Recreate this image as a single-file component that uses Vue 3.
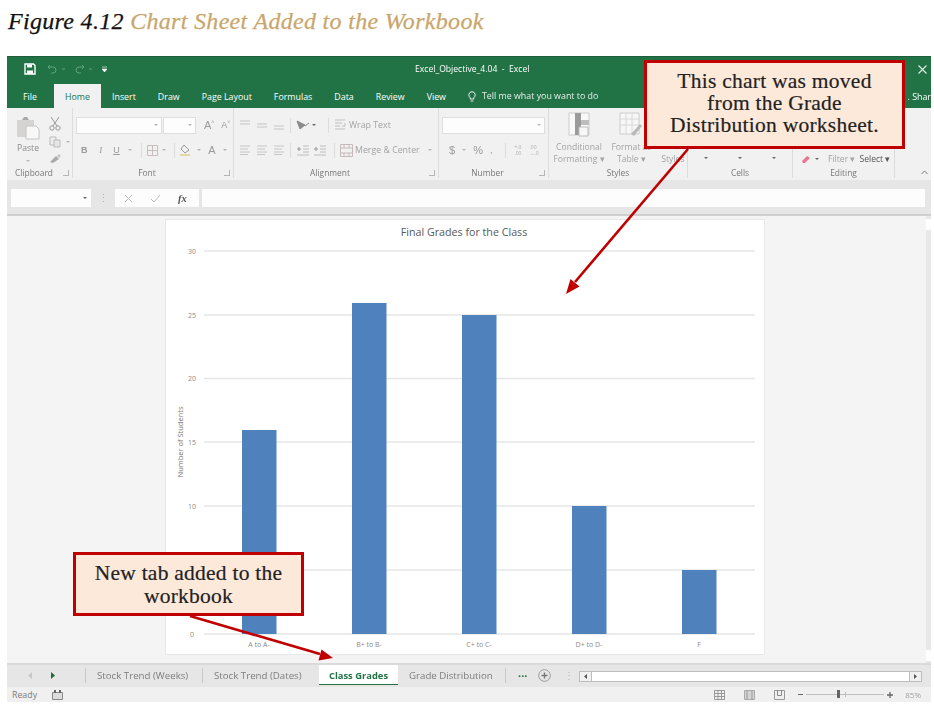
<script setup>
const quickTabs = ['Insert', 'Draw', 'Page Layout', 'Formulas', 'Data', 'Review', 'View']
const ticks = [
  { label: 30, y: 32 }, { label: 25, y: 96 }, { label: 20, y: 159.5 },
  { label: 15, y: 223 }, { label: 10, y: 287 }, { label: '', y: 351 }, { label: 0, y: 415 }
]
const bars = [
  { label: 'A to A-', x: 77, y: 211 },
  { label: 'B+ to B-', x: 187, y: 84 },
  { label: 'C+ to C-', x: 297, y: 96 },
  { label: 'D+ to D-', x: 407, y: 287 },
  { label: 'F', x: 517, y: 351 }
]
</script>

<template>
  <div class="stage">
    <h1 class="heading"><span class="fig">Figure 4.12</span> <span class="cap">Chart Sheet Added to the Workbook</span></h1>

    <div class="window">
      <header class="titlebar">
        <div class="qat">
          <svg width="12" height="12" viewBox="0 0 12 12"><path d="M1 1h8.500L11 2.500V11H1z" fill="none" stroke="#fff" stroke-width="1.400"/><path d="M3 1.500h5v3H3zM3 7.500h6V11H3z" fill="#fff"/></svg>
          <svg class="dim" width="46" height="10" viewBox="0 0 46 10"><path d="M1 3h5a3 3 0 0 1 0 6H4M1 3l2-2M1 3l2 2" fill="none" stroke="#5fa27f"/><path d="M15 5h3" stroke="#5fa27f"/><path d="M37 3h-5a3 3 0 0 0 0 6h2M37 3l-2-2M37 3l-2 2" fill="none" stroke="#5fa27f"/><path d="M42 5h3" stroke="#5fa27f"/></svg>
          <svg class="more" width="5" height="7" viewBox="0 0 5 7"><path d="M0 1h5M0 3l2.500 3 2.500-3z" fill="#fff" stroke="#fff" stroke-width=".6"/></svg>
        </div>
        <div class="doc">Excel_Objective_4.04&nbsp; -&nbsp; Excel</div>
        <svg class="close" width="9" height="9" viewBox="0 0 9 9"><path d="M.5.5l8 8M8.500.5l-8 8" stroke="#dfeee5" stroke-width="1.100"/></svg>
      </header>

      <nav class="tabs">
        <span class="tab file">File</span>
        <span class="tab active">Home</span>
        <span v-for="t in quickTabs" :key="t" class="tab">{{ t }}</span>
        <span class="tell">
          <svg width="8" height="11" viewBox="0 0 8 11"><path d="M4 .7a3.300 3.300 0 0 0-1.800 6V8h3.600V6.700A3.300 3.300 0 0 0 4 .7zM2.700 10h2.600" fill="none" stroke="#fff" stroke-width=".9"/></svg>
          Tell me what you want to do
        </span>
        <span class="share">. Shar</span>
      </nav>

      <section class="ribbon">
        <div class="group g-clip">
          <div class="body clip-body">
            <div class="paste">
              <svg width="25" height="24" viewBox="0 0 25 24"><path d="M1 4h17v17H1z" fill="#d6d3d3"/><path d="M6 4l2-3h3l2 3z" fill="#aaa"/><path d="M10 10h10l3 3v10H10z" fill="#f7f7f7" stroke="#c4c4c4"/></svg>
              <span>Paste</span>
              <i class="caret"></i>
            </div>
            <div class="clip-tools">
              <svg width="12" height="15" viewBox="0 0 12 15"><path d="M2 1l6 9M10 1L4 10" stroke="#999" fill="none"/><circle cx="3" cy="12" r="2.200" fill="none" stroke="#999"/><circle cx="9" cy="12" r="2.200" fill="none" stroke="#999"/></svg>
              <span class="tool-row"><svg width="13" height="12" viewBox="0 0 13 12"><path d="M1 1h6v8H1z" fill="#eee" stroke="#bbb"/><path d="M5 4h6v7H5z" fill="#e6e6e6" stroke="#bbb"/></svg><i class="caret"></i></span>
              <svg width="13" height="11" viewBox="0 0 13 11"><path d="M1 9l6-6 3 3-6 4z" fill="#aaa"/><path d="M8 3l2-2 2 2-2 2z" fill="#c6c6c6"/></svg>
            </div>
          </div>
          <div class="label left">Clipboard<i class="launch"></i></div>
        </div>

        <div class="group g-font">
          <div class="body rows">
            <div class="row font-top">
              <span class="box font-name"><i class="caret"></i></span>
              <span class="box font-size"><i class="caret"></i></span>
              <span class="glyph big">A<sup>˄</sup></span>
              <span class="glyph small">A<sup>˅</sup></span>
            </div>
            <div class="font-bottom">
              <b class="glyph">B</b><em class="glyph">I</em><u class="glyph">U</u><i class="caret"></i>
              <i class="sep"></i>
              <svg width="11" height="11" viewBox="0 0 11 11"><path d="M.5.5h10v10H.5zM5.500.5v10M.5 5.500h10" fill="none" stroke="#c9bcbc"/></svg>
              <i class="caret"></i>
              <i class="sep"></i>
              <svg width="13" height="12" viewBox="0 0 13 12"><path d="M5 1l5 5-4 3-4-4z" fill="none" stroke="#999"/><path d="M1 10h10v2H1z" fill="#e3d8a8"/></svg>
              <i class="caret"></i>
              <span class="glyph color">A</span>
              <i class="caret"></i>
            </div>
          </div>
          <div class="label shift">Font<i class="launch"></i></div>
        </div>

        <div class="group g-align">
          <div class="body rows">
            <div class="row align-row">
              <svg v-for="n in 3" :key="n" width="12" height="10" viewBox="0 0 12 10"><path :d="n === 1 ? 'M1 1h10M1 4h10' : n === 2 ? 'M1 4h10M1 7h10' : 'M1 6h10M1 9h10'" stroke="#c6c6c6" stroke-width="1.200"/></svg>
              <i class="sep"></i>
              <svg width="14" height="12" viewBox="0 0 14 12"><path d="M1 2l8 4-5 4zM9 7l4-3" fill="#8a8a8a" stroke="#8a8a8a"/></svg>
              <i class="caret dark tuck"></i>
              <i class="sep far"></i>
              <span class="cmd"><svg width="13" height="12" viewBox="0 0 13 12"><path d="M1 1h10M1 4h7M1 7h5M1 10h10M11 4v3H8" fill="none" stroke="#bfbfbf"/></svg>Wrap Text</span>
            </div>
            <div class="row align-row">
              <svg v-for="n in 3" :key="n" width="12" height="10" viewBox="0 0 12 10"><path d="M1 1h10M1 4h8M1 7h10M1 9.500h8" stroke="#c6c6c6"/></svg>
              <i class="sep"></i>
              <svg width="14" height="11" viewBox="0 0 14 11"><path d="M7 1h6M7 4h6M7 7h6M1 10h12" stroke="#bdbdbd"/><path d="M1 4h4M3 2v4" stroke="#999"/></svg>
              <svg class="tight" width="14" height="11" viewBox="0 0 14 11"><path d="M7 1h6M7 4h6M7 7h6M1 10h12" stroke="#bdbdbd"/><path d="M1 4h4M3 2v4" stroke="#999"/></svg>
              <i class="sep near"></i>
              <span class="cmd"><svg width="13" height="13" viewBox="0 0 13 13"><path d="M.5.5h12v12H.5zM.5 4h12M.5 9h12M4 9v3.500M9 9v3.500M4 .5V4M9 .5V4" fill="none" stroke="#c6baba"/></svg>Merge &amp; Center</span>
              <i class="caret end"></i>
            </div>
          </div>
          <div class="label shift">Alignment<i class="launch"></i></div>
        </div>

        <div class="group g-num">
          <div class="body rows">
            <div class="row"><span class="box num-box"><i class="caret"></i></span></div>
            <div class="row num-bottom">
              <span class="glyph cash">$</span><i class="caret"></i>
              <span class="glyph cash">%</span>
              <span class="glyph">,</span>
              <i class="sep"></i>
              <span class="dec">+.0<br>.00</span>
              <span class="dec">.00<br>→.0</span>
            </div>
          </div>
          <div class="label shift">Number<i class="launch"></i></div>
        </div>

        <div class="group g-styles">
          <div class="body style-body">
            <div class="style-item">
              <svg width="22" height="26" viewBox="0 0 22 26"><path d="M1 1h20v22H1z" fill="#f8f8f8" stroke="#ccc"/><path d="M7 1h6v22H7z" fill="#9a9a9a"/><path d="M13 8h8v5h-8z" fill="#bdbdbd"/><path d="M11 15h9v9h-9z" fill="#f7f7f7" stroke="#bbb"/></svg>
              <span>Conditional<br>Formatting ▾</span>
            </div>
            <div class="style-item">
              <svg width="24" height="26" viewBox="0 0 24 26"><path d="M1 1h19v21H1z" fill="#f7f7f7" stroke="#ccc"/><path d="M1 7h19M1 13h19M7 1v21M13 1v21" stroke="#d8d8d8"/><path d="M12 22l9-10 2 2-8 10z" fill="#b9b9b9"/></svg>
              <span>Format as<br>Table ▾</span>
            </div>
            <div class="style-item narrow"><span class="offset">Styles</span></div>
          </div>
          <div class="label">Styles</div>
        </div>

        <div class="group g-cells">
          <div class="body cell-body"><i class="caret dark"></i><i class="caret dark"></i><i class="caret dark"></i></div>
          <div class="label">Cells</div>
        </div>

        <div class="group g-edit">
          <div class="body edit-body">
            <svg width="10" height="9" viewBox="0 0 10 9"><path d="M1 6l5-5 3 2-5 5H2z" fill="#e57a98"/></svg>
            <i class="caret dark"></i>
            <span class="filter">Filter ▾</span>
            <span class="select">Select ▾</span>
          </div>
          <div class="label">Editing</div>
        </div>

        <svg class="collapse" width="7" height="5" viewBox="0 0 7 5"><path d="M.5 4l3-3 3 3" fill="none" stroke="#777"/></svg>
      </section>

      <section class="formula">
        <span class="namebox"><i class="caret dark"></i></span>
        <span class="grip">⋮</span>
        <span class="fnbox">
          <svg width="9" height="9" viewBox="0 0 9 9"><path d="M1 1l7 7M8 1L1 8" stroke="#bcbcbc"/></svg>
          <svg width="11" height="9" viewBox="0 0 11 9"><path d="M1 5l3 3 6-7" fill="none" stroke="#bcbcbc"/></svg>
          <em>fx</em>
        </span>
        <span class="fxinput"></span>
      </section>

      <section class="sheet">
        <svg class="chart" width="600" height="436" viewBox="0 0 600 436">
          <rect x=".5" y=".5" width="599" height="435" fill="#fff" stroke="#e8e8e8"/>
          <text x="299" y="17" class="c-title" text-anchor="middle">Final Grades for the Class</text>
          <g v-for="t in ticks" :key="t.y">
            <line x1="39" x2="590" :y1="t.y" :y2="t.y" stroke="#e6e6e6" stroke-width="1.300"/>
            <text x="27" :y="t.y + 2.500" class="c-tick" text-anchor="middle">{{ t.label }}</text>
          </g>
          <text class="c-axis" text-anchor="middle" transform="translate(18 223) rotate(-90)">Number of Students</text>
          <g v-for="b in bars" :key="b.label">
            <rect :x="b.x" :y="b.y" width="34.500" :height="415 - b.y" fill="#4f81bd"/>
            <text :x="b.x + 17" y="427.500" class="c-tick" text-anchor="middle">{{ b.label }}</text>
          </g>
        </svg>
        <div class="vscroll"><b></b><i></i></div>
      </section>

      <section class="sheettabs">
        <span class="nav">
          <svg width="4" height="7" viewBox="0 0 4 7"><path d="M4 0v7L0 3.500z" fill="#c8c8c8"/></svg>
          <svg width="4" height="7" viewBox="0 0 4 7"><path d="M0 0v7l4-3.500z" fill="#1f6b3f"/></svg>
        </span>
        <i class="tabsep"></i>
        <span class="stab weeks">Stock Trend (Weeks)</span>
        <i class="tabsep"></i>
        <span class="stab dates">Stock Trend (Dates)</span>
        <span class="stab current">Class Grades</span>
        <span class="stab dist">Grade Distribution</span>
        <i class="tabsep"></i>
        <span class="dots">...</span>
        <svg class="plus" width="13" height="13" viewBox="0 0 13 13"><circle cx="6.500" cy="6.500" r="5.800" fill="none" stroke="#9a9a9a"/><path d="M3.500 6.500h6M6.500 3.500v6" stroke="#777" stroke-width="1.400"/></svg>
        <span class="grip small">⋮</span>
        <span class="hscroll">
          <span class="sbtn"><svg width="3" height="5" viewBox="0 0 3 5"><path d="M3 0v5L0 2.500z" fill="#555"/></svg></span>
          <span class="strack"></span>
          <span class="sbtn"><svg width="3" height="5" viewBox="0 0 3 5"><path d="M0 0v5l3-2.500z" fill="#555"/></svg></span>
        </span>
      </section>

      <footer class="status">
        <span class="ready">Ready</span>
        <svg class="macro" width="11" height="10" viewBox="0 0 11 10"><path d="M.5 2.500h10v7H.5z" fill="#ddd" stroke="#888"/><path d="M2 0h2v3H2zM7 0h2v3H7z" fill="#666"/></svg>
        <span class="right">
          <svg width="11" height="10" viewBox="0 0 11 10"><path d="M.5.5h10v9H.5zM.5 3.500h10M.5 6.500h10M4 .5v9M7.500.5v9" fill="none" stroke="#999"/></svg>
          <svg width="11" height="10" viewBox="0 0 11 10"><path d="M.5.5h10v9H.5z" fill="#d4d4d4" stroke="#aaa"/><path d="M3 .5v9M8 .5v9" stroke="#999"/></svg>
          <svg width="11" height="10" viewBox="0 0 11 10"><path d="M.5.5h10v9H.5z" fill="none" stroke="#999"/><path d="M3.500.5v5h4v-5" fill="none" stroke="#888"/></svg>
          <span class="zoom">
            <i class="minus"></i>
            <span class="slider"><i class="thumb"></i><i class="mid"></i></span>
            <svg width="6" height="6" viewBox="0 0 6 6"><path d="M0 3h6M3 0v6" stroke="#666" stroke-width="1.300"/></svg>
          </span>
          <span class="pct">85%</span>
        </span>
      </footer>
    </div>

    <svg class="arrows" width="934" height="709" viewBox="0 0 934 709">
      <path d="M688 149L575 282" stroke="#c00000" stroke-width="2.600" fill="none"/>
      <path d="M566 294l4.500-15 9 7.500z" fill="#c00000"/>
      <path d="M190 616L320 654" stroke="#c00000" stroke-width="2.600" fill="none"/>
      <path d="M333 658l-14.500 2.500 3-11z" fill="#c00000"/>
    </svg>
    <div class="callout moved">This chart was moved<br>from the Grade<br>Distribution worksheet.</div>
    <div class="callout newtab">New tab added to the<br>workbook</div>
  </div>
</template>

<style>
html, body { margin: 0; background: #fff; }
</style>

<style scoped>
.stage {
  position: relative;
  width: 934px;
  height: 709px;
  overflow: hidden;
  background: #fff;
  font-family: "Open Sans", "Liberation Sans", sans-serif;
  filter: blur(0.35px);
}
.heading {
  height: 56px;
  margin: 0;
  padding: 6px 0 0 8px;
  box-sizing: border-box;
  font: italic 400 24px/30px "Liberation Serif", serif;
  letter-spacing: 0.31px;
  -webkit-text-stroke: 0.25px;
  white-space: nowrap;
}
.fig { color: #111; }
.cap { color: #c9a66b; }

.window {
  width: 924px;
  margin-left: 7px;
  height: 646px;
  display: flex;
  flex-direction: column;
  font-size: 8.85px;
  color: #6f6f6f;
  filter: blur(0.35px);
}
.titlebar {
  height: 25px;
  flex: none;
  box-sizing: border-box;
  border-top: 1px solid #1b5e39;
  background: #217346;
  display: flex;
  align-items: center;
  color: #fff;
  position: relative;
}
.qat { display: flex; align-items: center; gap: 5px; margin-left: 17px; }
.qat .dim { margin-left: 6px; }
.more { margin-left: 4px; }
.doc { position: absolute; left: 408px; font-size: 8.6px; white-space: nowrap; }
.close { margin-left: auto; margin-right: 4px; }

.tabs {
  height: 27px;
  flex: none;
  background: #217346;
  display: flex;
  align-items: flex-end;
  color: #fff;
  white-space: nowrap;
  padding-left: 5px;
}
.tab { height: 24px; line-height: 26px; padding: 0 11px; }
.file { margin-right: 6px; }
.active { background: #f1f1f1; color: #217346; }
.tell { height: 24px; line-height: 26px; margin-left: 11px; display: inline-flex; align-items: center; gap: 6px; color: #e6f0ea; }
.share { height: 24px; line-height: 26px; margin-left: auto; }

.ribbon {
  height: 72px;
  flex: none;
  background: #f1f1f1;
  font-size: 8.6px;
  display: flex;
  position: relative;
  white-space: nowrap;
}
.group {
  display: flex;
  flex-direction: column;
  box-sizing: border-box;
  border-right: 1px solid #dcdcdc;
  margin-bottom: 2px;
}
.body { height: 59px; flex: none; box-sizing: border-box; }
.label {
  position: relative;
  text-align: center;
  font-size: 8.4px;
  line-height: 11px;
  color: #777;
}
.label.left { text-align: left; padding-left: 8px; }
.label.shift { padding-right: 12px; }
.launch {
  position: absolute;
  right: 3px;
  top: 3px;
  width: 5px;
  height: 5px;
  border-right: 1px solid #b5b5b5;
  border-bottom: 1px solid #b5b5b5;
}
.g-clip { width: 66px; }
.g-font { width: 161px; }
.g-align { width: 205px; }
.g-num { width: 110px; }
.g-styles { width: 139px; }
.g-cells { width: 105px; }
.g-edit { width: 102px; }

.caret {
  display: inline-block;
  width: 0;
  height: 0;
  border-left: 2px solid transparent;
  border-right: 2px solid transparent;
  border-top: 2.500px solid #b5b5b5;
  flex: none;
}
.caret.dark { border-top-color: #666; }
.sep { display: inline-block; width: 1px; height: 15px; background: #dcdcdc; flex: none; }

.clip-body { display: flex; padding: 8px 0 0 9px; gap: 9px; }
.paste { display: flex; flex-direction: column; align-items: center; width: 24px; color: #8b8b8b; }
.paste span { line-height: 14px; margin-top: 1px; }
.paste .caret { margin-top: 5px; }
.clip-tools { display: flex; flex-direction: column; gap: 5px; }
.tool-row { display: flex; align-items: center; gap: 4px; }

.rows { display: flex; flex-direction: column; padding-top: 8px; gap: 7px; }
.row { display: flex; align-items: center; height: 18px; }
.box {
  display: flex;
  align-items: center;
  justify-content: flex-end;
  height: 17px;
  box-sizing: border-box;
  padding-right: 3px;
  background: #fdfdfd;
  border: 1px solid #dedede;
}
.font-top { padding-left: 3px; }
.font-name { width: 86px; }
.font-size { width: 33px; margin-left: 1px; }
.glyph { color: #9a9a9a; font-size: 9px; font-style: normal; font-family: "Liberation Sans", sans-serif; }
.big { margin-left: 8px; font-size: 11px; }
.small { margin-left: 7px; font-size: 9px; }
sup { font-size: 5px; line-height: 0; }
.font-bottom {
  display: grid;
  height: 18px;
  align-items: center;
  justify-items: center;
  padding-left: 3px;
  grid-template-columns: 16.5px 16.5px 15px 12px 10.5px 12px 10.5px 10px 13px 13.5px 13px 12.5px;
}
.font-bottom em { font-family: "Liberation Serif", serif; font-style: italic; }
.color { font-size: 11px; }

.align-row { padding-left: 5px; gap: 5px; }
.tuck { margin-left: -3px; }
.far { margin-left: 7px; }
.tight { margin-left: -2px; }
.near { margin-left: 2px; }
.cmd { display: inline-flex; align-items: center; gap: 2px; color: #a3a3a3; font-size: 8.8px; }
.end { margin-left: 3px; }

.num-box { width: 103px; margin-left: 3px; }
.num-bottom { padding-left: 10px; gap: 7px; }
.num-bottom .sep { margin-left: 6px; }
.cash { font-size: 11px; }
.dec { font-size: 5px; line-height: 6px; color: #b0b0b0; margin-left: 1px; }

.style-body { display: flex; padding: 3px 0 0 5px; gap: 4px; }
.style-item { display: flex; flex-direction: column; align-items: center; width: 50px; text-align: center; line-height: 12px; color: #a3a3a3; }
.style-item span { margin-top: 3px; }
.style-item svg { margin-top: 1px; }
.narrow { width: 30px; }
.style-item .offset { margin-top: 42px; }

.cell-body { display: flex; padding: 49px 0 0 16px; gap: 30px; }
.edit-body { display: flex; align-items: center; padding: 43px 0 0 8px; }
.edit-body .caret { margin-left: 4px; }
.filter { margin-left: 9px; color: #a3a3a3; }
.select { margin-left: 4px; color: #555; }
.collapse { position: absolute; right: 3px; top: 62px; }

.formula {
  height: 36px;
  flex: none;
  box-sizing: border-box;
  background: #e6e6e6;
  border-bottom: 2px solid #cfcfcf;
  display: flex;
  align-items: flex-start;
  padding: 9px 6px 0 4px;
}
.namebox, .fnbox, .fxinput { height: 18px; background: #fdfdfd; display: flex; align-items: center; box-sizing: border-box; }
.namebox { width: 80px; justify-content: flex-end; padding-right: 4px; }
.grip { width: 24px; text-align: center; line-height: 18px; color: #b5b5b5; font-size: 11px; }
.fnbox { width: 84px; gap: 17px; padding-left: 9px; }
.fnbox em { font: italic 700 10.5px "Liberation Serif", serif; color: #555; }
.fxinput { flex: 1; margin-left: 3px; }

.sheet {
  height: 449px;
  flex: none;
  box-sizing: border-box;
  background: #f4f4f4;
  border-bottom: 2px solid #dadada;
  display: flex;
  padding: 3px 0 0 158px;
}
.chart { display: block; flex: none; }
.c-title { font: 10.7px "Open Sans", sans-serif; fill: #595959; }
.c-tick { font: 7px "Open Sans", sans-serif; fill: #8a8a8a; }
.c-axis { font: 7.500px "Open Sans", sans-serif; fill: #777; }
.vscroll { margin-left: auto; width: 5px; margin-top: -3px; background: #e8e8e8; display: flex; flex-direction: column; justify-content: space-between; padding: 3px 0 2px; box-sizing: border-box; }
.vscroll i, .vscroll b { display: block; height: 11px; background: #fff; }

.sheettabs {
  height: 22px;
  flex: none;
  background: #e6e6e6;
  display: flex;
  align-items: flex-start;
  color: #7d7d7d;
  font-size: 9.7px;
  white-space: nowrap;
}
.nav { display: flex; align-items: center; gap: 19px; width: 78px; height: 20px; padding-left: 21px; box-sizing: border-box; }
.tabsep { width: 1px; height: 15px; margin-top: 3px; background: #c9c9c9; flex: none; }
.stab { line-height: 21px; }
.weeks { margin-left: 11px; width: 105px; }
.dates { margin-left: 11px; width: 105px; }
.current {
  width: 79px;
  height: 19px;
  background: #fff;
  color: #217346;
  font-size: 9.4px;
  font-weight: 700;
  text-align: center;
  border-bottom: 1px solid #217346;
}
.dist { margin-left: 11px; width: 96px; }
.dots { margin-left: 12px; color: #217346; line-height: 16px; font-size: 11px; font-weight: 700; width: 20px; }
.plus { margin-top: 4px; }
.grip.small { width: 21px; line-height: 20px; font-size: 10px; }
.hscroll { display: flex; align-items: stretch; width: 343px; height: 11px; margin-top: 6px; background: #fff; border: 1px solid #bdbdbd; box-sizing: border-box; }
.sbtn { width: 11px; background: #f1f1f1; display: flex; align-items: center; justify-content: center; }
.strack { flex: 1; background: #fff; border: solid #bdbdbd; border-width: 0 1px; }

.status {
  height: 15px;
  flex: none;
  background: #f0f0f0;
  display: flex;
  align-items: center;
  color: #7d7d7d;
  font-size: 8.8px;
  padding-left: 5px;
}
.ready { width: 40px; }
.macro { flex: none; }
.right { margin-left: auto; display: flex; align-items: center; gap: 19px; padding-right: 10px; font-size: 8px; }
.zoom { display: flex; align-items: center; gap: 3px; margin-left: -6px; }
.minus { width: 5px; height: 1.500px; background: #666; }
.slider { position: relative; width: 78px; height: 1px; background: #c0c0c0; }
.thumb { position: absolute; left: 31px; top: -4px; width: 3px; height: 8px; background: #666; }
.mid { position: absolute; left: 39px; top: -2px; width: 1px; height: 5px; background: #bbb; }
.pct { margin-left: -6.500px; color: #a0a0a0; }

.arrows { position: absolute; left: 0; top: 0; pointer-events: none; }
.callout {
  position: absolute;
  box-sizing: border-box;
  background: #fde9d9;
  border: 3px solid #c00000;
  color: #222;
  text-align: center;
  font-family: "Liberation Serif", serif;
  font-size: 21.500px;
  letter-spacing: 0.25px;
  -webkit-text-stroke: 0.2px;
  white-space: nowrap;
}
.moved { left: 644px; top: 60px; width: 261px; height: 89px; line-height: 22px; padding-top: 7px; }
.newtab { left: 73px; top: 552px; width: 231px; height: 64px; line-height: 23px; padding-top: 7px; }
</style>
